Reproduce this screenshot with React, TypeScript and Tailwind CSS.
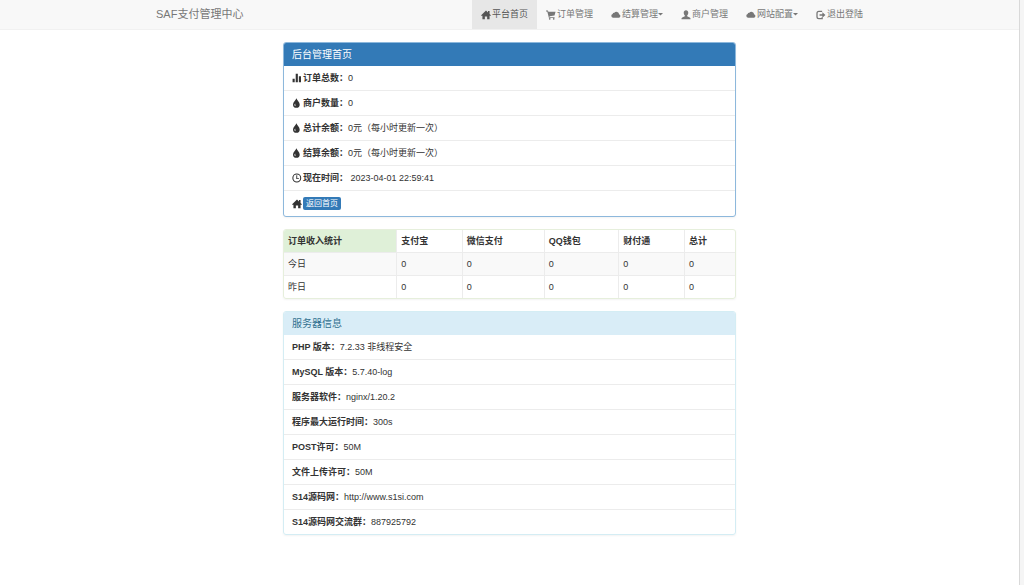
import type { ReactNode } from 'react';

type IconName = 'home' | 'cart' | 'cloud' | 'user' | 'logout' | 'stats' | 'tint' | 'time';

const shapes: Record<IconName, ReactNode> = {
  home: <path d="M7 .6 9.800 3.400V1.400H12V5.600L13.800 7.400V8H12v5H8.600V9H5.400v4H2V8H.2V7.400Z" />,
  cart: (
    <>
      <path d="M0 .8h2.700l.6 1.600H13.400l-1.500 5.400-7 .9.2 1h6.900v1.300H4L1.800 2.200H0Z" />
      <circle cx="5.200" cy="12.300" r="1.200" />
      <circle cx="10.800" cy="12.300" r="1.200" />
    </>
  ),
  cloud: <path d="M3 10.800a2.600 2.600 0 0 1-.7-5.100 2.200 2.200 0 0 1 2.400-2 3.800 3.800 0 0 1 6.600 2.200A2.500 2.500 0 0 1 11 10.800Z" />,
  user: <path d="M7 .5c2 0 3.200 1.400 3.200 3.300 0 1.700-.7 3-1.600 3.900v1.100l3.600 1.800c.8.4 1.100 1 1.100 1.800V13H.7v-.6c0-.8.3-1.400 1.100-1.800l3.600-1.800V7.700C4.500 6.800 3.800 5.500 3.800 3.800 3.800 1.900 5 .5 7 .5Z" />,
  logout: (
    <>
      <path d="M8.600 2H4a2.600 2.600 0 0 0-2.600 2.600v4.800A2.600 2.600 0 0 0 4 12h4.600v-1.800" fill="none" stroke="currentColor" strokeWidth="1.800" />
      <path d="M8.900 3.300 13.200 7l-4.300 3.700V8.200H5V5.800h3.900Z" />
    </>
  ),
  stats: <path d="M.8 8.200h3V13h-3ZM5.200 1h3v12h-3ZM9.600 4.600h3V13h-3Z" />,
  tint: <path fillRule="evenodd" d="M6.200.2c.8 3 4.600 5 4.600 8.800a4.700 4.700 0 0 1-9.400 0C1.400 5.200 5.300 3.200 6.200.2ZM4.400 7.600c-1.500 1.600-1.200 3.400.6 3.800-.5-1.300-.2-2.500-.6-3.800Z" />,
  time: (
    <>
      <circle cx="6.700" cy="7" r="5.500" fill="none" stroke="currentColor" strokeWidth="1.500" />
      <path d="M6 3h1.300v4.300H9.700v1.200H6Z" />
    </>
  ),
};

function Icon({ name }: { name: IconName }) {
  return (
    <svg viewBox="0 0 14 14" fill="currentColor" aria-hidden="true" className="size-2.5 shrink-0">
      {shapes[name]}
    </svg>
  );
}

const navItems: { label: string; icon: IconName; active?: boolean; menu?: boolean }[] = [
  { label: '平台首页', icon: 'home', active: true },
  { label: '订单管理', icon: 'cart' },
  { label: '结算管理', icon: 'cloud', menu: true },
  { label: '商户管理', icon: 'user' },
  { label: '网站配置', icon: 'cloud', menu: true },
  { label: '退出登陆', icon: 'logout' },
];

const summary: { icon: IconName; label: string; value: string }[] = [
  { icon: 'stats', label: '订单总数：', value: '0' },
  { icon: 'tint', label: '商户数量：', value: '0' },
  { icon: 'tint', label: '总计余额：', value: '0元（每小时更新一次）' },
  { icon: 'tint', label: '结算余额：', value: '0元（每小时更新一次）' },
  { icon: 'time', label: '现在时间：', value: '\u00a02023-04-01 22:59:41' },
];

const channels = ['支付宝', '微信支付', 'QQ钱包', '财付通', '总计'];
const days = ['今日', '昨日'];

const server = [
  ['PHP 版本：', '7.2.33 非线程安全'],
  ['MySQL 版本：', '5.7.40-log'],
  ['服务器软件：', 'nginx/1.20.2'],
  ['程序最大运行时间：', '300s'],
  ['POST许可：', '50M'],
  ['文件上传许可：', '50M'],
  ['S14源码网：', 'http://www.s1si.com'],
  ['S14源码网交流群：', '887925792'],
];

export default function App() {
  return (
    <div className="flex min-h-screen bg-white font-['Liberation_Sans','Noto_Sans_CJK_SC',sans-serif] text-[9px] leading-3 text-[#333]">
      <div className="min-w-0 flex-1">
        <header className="border-b border-[#f1f1f1] bg-[#f8f8f8] text-[#777]">
          <nav className="mx-auto flex max-w-[725px] justify-between">
            <a href="#" className="px-[9px] py-[7px] text-[11px] leading-[15px]">SAF支付管理中心</a>
            <ul className="flex">
              {navItems.map((item) => (
                <li key={item.label}>
                  <a
                    href="#"
                    className={`flex h-full items-center px-[9px] py-[7px] leading-[15px] ${item.active ? 'bg-[#e7e7e7] text-[#555]' : ''}`}
                  >
                    <Icon name={item.icon} />
                    <span className="ml-px whitespace-nowrap">{item.label}</span>
                    {item.menu && (
                      <svg viewBox="0 0 8 4" fill="currentColor" aria-hidden="true" className="w-[5px]">
                        <path d="M0 0h8L4 4Z" />
                      </svg>
                    )}
                  </a>
                </li>
              ))}
            </ul>
          </nav>
        </header>

        <main className="mx-auto flex max-w-[453px] flex-col gap-3 pt-3">
          <section className="overflow-hidden rounded-[3px] border border-[#8db8dc] bg-white shadow-xs">
            <h1 className="bg-[#337ab7] px-2 py-1 text-[10px] leading-[15px] text-white">后台管理首页</h1>
            <ul className="divide-y divide-[#ececec] pb-px">
              {summary.map((row) => (
                <li key={row.label} className="flex items-center px-2 py-1.5 leading-3">
                  <Icon name={row.icon} />
                  <b className="ml-px">{row.label}</b>
                  <span>{row.value}</span>
                </li>
              ))}
              <li className="flex items-center px-2 pt-1.5 pb-[5px]">
                <Icon name="home" />
                <a href="#" className="ml-px rounded-xs bg-[#337ab7] px-[3px] text-[8px] leading-[13px] text-white">返回首页</a>
              </li>
            </ul>
          </section>

          <section className="overflow-hidden rounded-[3px] border border-[#e6efdc] shadow-xs">
            <table className="w-full table-fixed border-collapse text-left">
              <colgroup>
                <col className="w-[25%]" />
                <col className="w-[14.500%]" />
                <col className="w-[18.200%]" />
                <col className="w-[16.500%]" />
                <col className="w-[14.600%]" />
                <col />
              </colgroup>
              <thead>
                <tr>
                  <th className="bg-[#dff0d8] px-1 py-[5px]">订单收入统计</th>
                  {channels.map((name) => (
                    <th key={name} className="border-l border-[#ececec] px-1 py-[5px]">{name}</th>
                  ))}
                </tr>
              </thead>
              <tbody>
                {days.map((day) => (
                  <tr key={day} className="border-t border-[#ececec] odd:bg-[#f9f9f9]">
                    <td className="px-1 py-[5px]">{day}</td>
                    {channels.map((name) => (
                      <td key={name} className="border-l border-[#ececec] px-1 py-[5px]">0</td>
                    ))}
                  </tr>
                ))}
              </tbody>
            </table>
          </section>

          <section className="overflow-hidden rounded-[3px] border border-[#d4edf4] shadow-xs">
            <h2 className="bg-[#d9edf7] px-2 py-1 text-[10px] leading-[15px] text-[#31708f]">服务器信息</h2>
            <ul className="divide-y divide-[#ececec]">
              {server.map(([label, value]) => (
                <li key={label} className="px-2 py-1.5 leading-3">
                  <b>{label}</b>
                  {value}
                </li>
              ))}
            </ul>
          </section>
        </main>
      </div>
      <div className="w-[5px] shrink-0 border-l border-[#d9d9d9] bg-[#f5f5f5]" />
    </div>
  );
}
